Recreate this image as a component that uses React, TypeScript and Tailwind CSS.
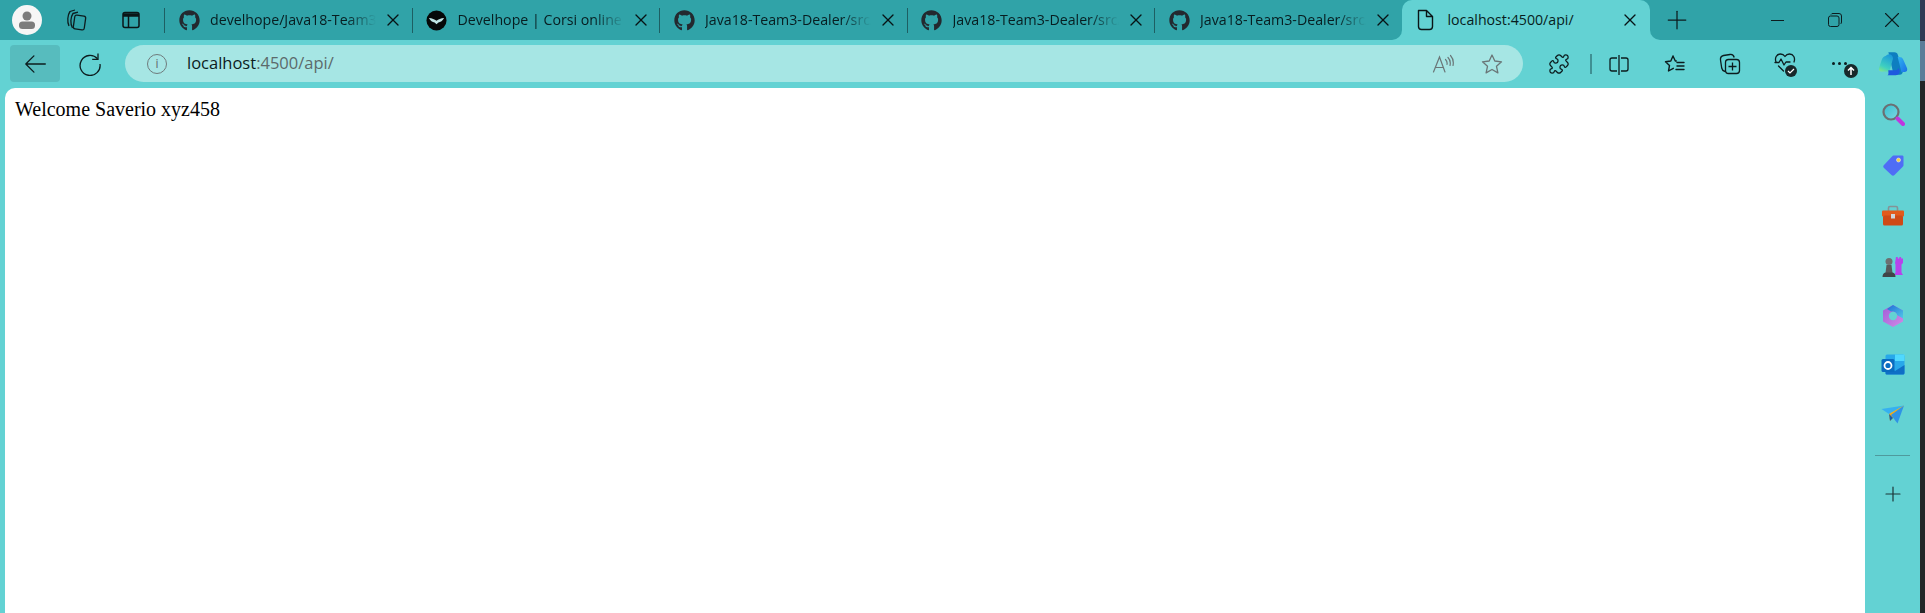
import { FaGithub } from "react-icons/fa";
import { Plus, Puzzle, X } from "lucide-react";

const tabs = [
  { id: 1, title: "develhope/Java18-Team3-Dealer", icon: "github" },
  { id: 2, title: "Develhope | Corsi online per il lavoro", icon: "develhope" },
  { id: 3, title: "Java18-Team3-Dealer/src/main", icon: "github" },
  { id: 4, title: "Java18-Team3-Dealer/src/main", icon: "github" },
  { id: 5, title: "Java18-Team3-Dealer/src/main", icon: "github" },
];

function DevelhopeIcon() {
  return (
    <svg width="21" height="21" viewBox="0 0 22 22">
      <circle cx="11" cy="11" r="10.5" fill="#050808" />
      <path d="M3 8.5c3.500.4 6 1.200 8 2.800 2-1.600 4.500-2.400 8-2.800-1.500 3-3.800 4.200-6 4.600L11 15l-2-1.900C6.800 12.700 4.500 11.500 3 8.500z" fill="#bfe4e4" />
    </svg>
  );
}

function Tab({ title, icon }: { title: string; icon: string }) {
  return (
    <div className="flex w-[247.5px] h-[40px] items-center shrink-0">
      <div className="w-[1px] h-[25px] bg-[#1d5f63] shrink-0" />
      <div className="ml-[13px] w-[22px] flex justify-center shrink-0">
        {icon === "github" ? <FaGithub className="text-[#23292f] text-[21px]" /> : <DevelhopeIcon />}
      </div>
      <span className="ml-[10px] w-[166px] overflow-hidden whitespace-nowrap text-[14.2px] text-[#071d20] [mask-image:linear-gradient(to_right,black_82%,transparent)]">
        {title}
      </span>
      <X size={20} strokeWidth={1.6} className="ml-[7px] text-[#071315] shrink-0" />
    </div>
  );
}

function TabStrip() {
  return (
    <div className="flex h-[40px] shrink-0 bg-[#63d2d3]">
      <div className="flex items-center h-[40px] w-[1401.5px] shrink-0 bg-[#30a3a8] rounded-br-[10px]">
        <div className="w-[54px] flex justify-center shrink-0">
          <div className="w-[30px] h-[30px] rounded-full bg-[#f6f6f6] flex items-center justify-center">
            <svg width="20" height="20" viewBox="0 0 20 20" fill="#7c7c7c">
              <circle cx="10" cy="6" r="4.5" />
              <rect x="2" y="11.5" width="16" height="7.5" rx="3.5" />
            </svg>
          </div>
        </div>
        <div className="w-[46px] flex justify-center shrink-0 pr-[2px]">
          <svg width="24" height="24" viewBox="0 0 24 24" fill="none" stroke="#0c1c1e" strokeWidth="1.3" strokeLinejoin="round">
            <rect x="10" y="7.5" width="11" height="14" rx="2" transform="rotate(8 15.5 14.5)" />
            <path d="M8.500 20C6 16 6.500 9 9 5.500l5-1.300M5 18C3 14 3.500 7 6 3.500L11 2" />
          </svg>
        </div>
        <div className="w-[60px] flex justify-center shrink-0 pl-[2px]">
          <svg width="20" height="20" viewBox="0 0 20 20" fill="none" stroke="#0a1517" strokeWidth="1.5">
            <rect x="2" y="2.5" width="16" height="15" rx="2" />
            <path d="M2 5h16" strokeWidth="3.5" />
            <path d="M7.500 6v11" />
          </svg>
        </div>
        <div className="w-[4px] shrink-0" />
        {tabs.map((tab) => (
          <Tab key={tab.id} title={tab.title} icon={tab.icon} />
        ))}
      </div>
      <div className="w-[248.5px] h-[40px] shrink-0 bg-[#30a3a8]">
        <div className="flex h-full items-center bg-[#63d2d3] rounded-t-[10px] pl-[14px]">
          <svg width="18" height="22" viewBox="0 0 18 22" fill="none" stroke="#0a1517" strokeWidth="1.4" strokeLinejoin="round">
            <path d="M2.500 1.500h8l6 6v10a3 3 0 0 1-3 3h-8a3 3 0 0 1-3-3z M10.500 1.500v6h6" />
          </svg>
          <span className="ml-[14px] w-[172px] whitespace-nowrap text-[14.2px] text-[#071d20]">localhost:4500/api/</span>
          <X size={20} strokeWidth={1.6} className="text-[#071315] shrink-0" />
        </div>
      </div>
      <div className="flex flex-1 items-center bg-[#30a3a8] rounded-bl-[10px]">
        <div className="w-[54px] flex justify-center shrink-0">
          <Plus size={30} strokeWidth={1} className="text-[#0c1c1e]" />
        </div>
        <div className="ml-auto flex items-center">
          <div className="w-[57px] flex justify-center">
            <div className="w-[13px] h-[1px] bg-[#0c1c1e]" />
          </div>
          <div className="w-[57px] flex justify-center">
            <svg width="14" height="14" viewBox="0 0 14 14" fill="none" stroke="#0c1c1e" strokeWidth="1">
              <rect x="0.5" y="3" width="10.5" height="10.5" rx="2" />
              <path d="M3 1.500C3.500.700 4 .5 5 .5h6a2.500 2.500 0 0 1 2.500 2.500v6c0 1-.4 1.700-1 2" />
            </svg>
          </div>
          <div className="w-[57px] flex justify-center">
            <X size={26} strokeWidth={1} className="text-[#0c1c1e]" />
          </div>
        </div>
      </div>
    </div>
  );
}

function CopilotLogo() {
  return (
    <svg width="30" height="27" viewBox="0 0 32 28">
      <defs>
        <linearGradient id="copLeft" x1="0.6" y1="0" x2="0.2" y2="1">
          <stop offset="0" stopColor="#1d9bd8" />
          <stop offset="0.7" stopColor="#3fd0c0" />
          <stop offset="1" stopColor="#7be38f" />
        </linearGradient>
        <linearGradient id="copRight" x1="0" y1="0" x2="1" y2="1">
          <stop offset="0" stopColor="#2fb4ef" />
          <stop offset="1" stopColor="#1a6fe8" />
        </linearGradient>
      </defs>
      <path d="M11 1h6.500c2 0 3.200 1 3.800 3l5 16c.7 2.800-1 5-3.800 5h-3c-2 0-3-1-3.500-3L12 5c-.4-2.200-.8-3.500-1-4z" fill="#0e7ec0" />
      <path d="M8 5c-2 .5-3 1.500-4 4l-3 9c-.5 2 .5 3.500 3 3.500h5.500c2 0 3-1 3.500-3l3-11C16 5 14 3 12 3c-1.500 0-3 1-4 2z" fill="url(#copLeft)" />
      <path d="M21 6c3 0 5 0 6 3l4 9c.7 3-1 4-3 4h-3l-4-16z" fill="url(#copRight)" />
      <path d="M11 20h8c1.500 0 2.500-1 3-2.500l1 3c.6 2.500-1 5-4 5H9c3 0 2-3 2-5.500z" fill="#1f58de" />
    </svg>
  );
}

function Toolbar() {
  return (
    <div className="flex h-[48px] items-center shrink-0 pl-[10px] pb-[1px] bg-[#63d2d3]">
      <div className="w-[50px] h-[37px] rounded-[4px] bg-[#57bcbe] flex items-center justify-center shrink-0">
        <svg width="26" height="26" viewBox="0 0 24 24" fill="none" stroke="#0c1c1e" strokeWidth="1.2" strokeLinecap="round" strokeLinejoin="round">
          <path d="M21.500 12H3.500M11 4.500 3.500 12l7.500 7.500" />
        </svg>
      </div>
      <div className="w-[60px] flex justify-center shrink-0">
        <svg width="24" height="24" viewBox="0 0 24 24" fill="none" stroke="#0c1c1e" strokeWidth="1.3">
          <path d="M19.500 6.700A10 10 0 1 0 22 12" />
          <path d="M20 1.500v5.800h-5.800" />
        </svg>
      </div>
      <div className="ml-[5px] flex h-[37px] w-[1398px] items-center rounded-full bg-[#a6e6e4] shrink-0">
        <div className="ml-[22px] w-[20px] h-[20px] rounded-full border border-[#6f7b7c] flex items-center justify-center text-[12px] leading-none text-[#5f6c6d]">
          i
        </div>
        <span className="ml-[20px] text-[16.5px] text-[#0c1c1e] whitespace-nowrap">
          localhost<span className="text-[#5c6a6b]">:4500/api/</span>
        </span>
        <div className="ml-auto flex items-center gap-[27px] pr-[20px]">
          <svg width="22" height="22" viewBox="0 0 22 22" fill="none" stroke="#6a7677" strokeWidth="1.2" strokeLinecap="round">
            <path d="M1.500 19 7.500 4l5.500 15M3.500 14.500h8" />
            <path d="M13.500 6.500c1.500 1.500 1.800 3.500 1.500 5M16 4.500c2 2 2.700 5 2 8M18.500 2.500c2.500 2.800 3.200 6.800 2.500 10" />
          </svg>
          <svg width="22" height="22" viewBox="0 0 22 22" fill="none" stroke="#6a7677" strokeWidth="1.3" strokeLinejoin="round">
            <path d="m11 2 2.800 6 6.700.8-5 4.500 1.400 6.600L11 16.500 5.100 19.900l1.400-6.600-5-4.500 6.700-.8z" />
          </svg>
        </div>
      </div>
      <div className="ml-[25px] shrink-0">
        <Puzzle size={22} strokeWidth={1.4} className="text-[#0c1c1e]" />
      </div>
      <div className="ml-[20px] w-[2px] h-[20px] bg-[#3f9093] shrink-0" />
      <div className="w-[54px] flex justify-center shrink-0">
        <svg width="20" height="22" viewBox="0 0 20 22" fill="none" stroke="#0c1c1e" strokeWidth="1.3">
          <path d="M8 5H3a2 2 0 0 0-2 2v9a2 2 0 0 0 2 2h5M12 5h5a2 2 0 0 1 2 2v9a2 2 0 0 1-2 2h-5M10 2v20" />
        </svg>
      </div>
      <div className="w-[58px] flex justify-center shrink-0">
        <svg width="22" height="22" viewBox="0 0 22 22" fill="none" stroke="#0c1c1e" strokeWidth="1.4" strokeLinejoin="round" strokeLinecap="round">
          <path d="M9 3 6.800 8 1.500 8.800l4 3.700-1 5.500 4.800-2.700M9 3l2.300 5h1" />
          <path d="M13 9.500h7M13 13h7M12 16.500h8" />
        </svg>
      </div>
      <div className="w-[52px] flex justify-center shrink-0">
        <svg width="22" height="22" viewBox="0 0 22 22" fill="none" stroke="#0c1c1e" strokeWidth="1.3" strokeLinejoin="round">
          <path d="M6 18.500c-2-.5-3-2-3.300-3.500L1.500 7c-.3-2.500 1-4 3-4.500L11 1.500c2-.3 3.700.7 4.200 3" />
          <rect x="6.500" y="6.500" width="14" height="14" rx="3" />
          <path d="M13.500 9.500v8M9.500 13.500h8" />
        </svg>
      </div>
      <div className="relative w-[58px] h-[24px] flex justify-center shrink-0">
        <svg width="22" height="22" viewBox="0 0 22 22" fill="none" stroke="#0c1c1e" strokeWidth="1.3" strokeLinejoin="round" strokeLinecap="round">
          <path d="M2 10C.5 6 2.500 2 6.500 2c2 0 3.500 1 4.500 2.500C12 3 13.500 2 15.500 2c4 0 6 4 4.500 8" />
          <path d="M1 10.500h4l2-3.500 3 6 2-3h4M4.500 14 9.500 19" />
        </svg>
        <div className="absolute left-[29px] top-[13px] w-[12px] h-[12px] rounded-full bg-[#17282a] flex items-center justify-center">
          <svg width="8" height="8" viewBox="0 0 8 8" fill="none" stroke="#fff" strokeWidth="1.2">
            <path d="m1 4 2 2 4-4" />
          </svg>
        </div>
      </div>
      <div className="relative w-[52px] h-[24px] flex items-center justify-center shrink-0">
        <div className="flex gap-[3px] -ml-[1px]">
          <div className="w-[3px] h-[3px] rounded-full bg-[#0c1c1e]" />
          <div className="w-[3px] h-[3px] rounded-full bg-[#0c1c1e]" />
          <div className="w-[3px] h-[3px] rounded-full bg-[#0c1c1e]" />
        </div>
        <div className="absolute left-[30px] top-[12px] w-[14px] h-[14px] rounded-full bg-[#17282a] flex items-center justify-center">
          <svg width="10" height="10" viewBox="0 0 10 10" fill="none" stroke="#fff" strokeWidth="1.5">
            <path d="M5 9V1.500M2 4.500l3-3 3 3" />
          </svg>
        </div>
      </div>
      <div className="ml-[12px] shrink-0 mt-[2px]">
        <CopilotLogo />
      </div>
    </div>
  );
}

function Sidebar() {
  return (
    <div className="w-[55px] shrink-0 flex flex-col items-center pt-[12px] bg-[#63d2d3]">
      <div className="h-[30px] flex items-center justify-center">
        <svg width="24" height="26" viewBox="0 0 24 26">
          <defs>
            <linearGradient id="lens" x1="0" y1="0" x2="1" y2="1">
              <stop offset="0" stopColor="#34c1cf" />
              <stop offset="1" stopColor="#7fd6e2" />
            </linearGradient>
          </defs>
          <circle cx="10" cy="10" r="7.5" fill="url(#lens)" stroke="#6c6f72" strokeWidth="2.2" />
          <path d="M16.500 16.500 22 22" stroke="#c036e0" strokeWidth="4" strokeLinecap="round" />
        </svg>
      </div>
      <div className="h-[50px] mt-[10px] flex items-center justify-center">
        <svg width="24" height="24" viewBox="0 0 24 24">
          <path d="M13 2.500h8c1 0 1.500.5 1.500 1.500v8c0 1-.5 1.500-1 2l-8 8c-1 1-2 1-3 0l-7.500-7c-1-1-1-2 0-3l8-8.500c.5-.5 1-1 2-1z" fill="#4f6df5" />
          <circle cx="17.500" cy="7" r="2" fill="#f6d23c" stroke="#dde6f7" strokeWidth=".6" />
        </svg>
      </div>
      <div className="h-[52px] flex items-center justify-center">
        <svg width="24" height="22" viewBox="0 0 24 22">
          <path d="M7.500 6V3c0-1 .5-1.500 1.500-1.500h6c1 0 1.500.5 1.500 1.500v3" fill="none" stroke="#849396" strokeWidth="1.6" />
          <rect x="1" y="5.5" width="22" height="6" rx="1" fill="#e25b1d" />
          <rect x="2" y="10.5" width="20" height="10" rx="1.5" fill="#cf4a17" />
          <rect x="10" y="9" width="4" height="4.5" fill="#cfd6dc" />
        </svg>
      </div>
      <div className="h-[50px] flex items-center justify-center">
        <svg width="24" height="24" viewBox="0 0 24 24">
          <path d="M15 2h1.800v1.500h1.500V2h1.800v1.500H22V2v6l-1.500 1.500v8l1.500 2.500h-9l1.500-2.500v-8L14 8z" fill="#b743ec" />
          <circle cx="8" cy="6.5" r="3.5" fill="#6c7072" />
          <path d="M5.500 10h5l1 8h-7z" fill="#565a5c" />
          <path d="M1.500 22c0-2.500 1-4 3-4.500h7c2 .5 3 2 3 4.500z" fill="#404547" />
        </svg>
      </div>
      <div className="h-[48px] flex items-center justify-center">
        <svg width="24" height="24" viewBox="0 0 24 24">
          <defs>
            <linearGradient id="m365" x1="0" y1="0" x2="1" y2="1">
              <stop offset="0" stopColor="#a05ed8" />
              <stop offset="1" stopColor="#d08ae6" />
            </linearGradient>
            <linearGradient id="m365b" x1="0" y1="0" x2="1" y2="1">
              <stop offset="0" stopColor="#1f6cd8" />
              <stop offset="1" stopColor="#52c6e8" />
            </linearGradient>
          </defs>
          <path d="M12 1 22 6.500v11L12 23 2 17.500v-11z" fill="url(#m365)" />
          <path d="M12 1 22 6.500v8L16 11c-1-3-3-4-6-3.500L6 5z" fill="url(#m365b)" />
          <circle cx="12" cy="12" r="4.2" fill="#63d2d3" />
        </svg>
      </div>
      <div className="h-[50px] flex items-center justify-center">
        <svg width="24" height="24" viewBox="0 0 24 24">
          <rect x="4.5" y="1.5" width="19" height="20" rx="1.5" fill="#28a8ea" />
          <path d="M14 1.500h9.500v6.500H14z" fill="#50d9ff" />
          <path d="M4.500 12 14 18l9.500-6v8c0 1-1 1.500-1.500 1.500H6c-1 0-1.500-.5-1.500-1.500z" fill="#0f6fc6" />
          <rect x="0.5" y="6" width="13" height="13" rx="1.5" fill="#0a6cc0" />
          <circle cx="7" cy="12.5" r="3.5" fill="none" stroke="#fff" strokeWidth="1.8" />
        </svg>
      </div>
      <div className="h-[50px] flex items-center justify-center">
        <svg width="24" height="20" viewBox="0 0 24 20">
          <path d="M.5 4 23 .5 8 9z" fill="#36b0f0" />
          <path d="M23 .5 8 9l1 7z" fill="#f0a91c" />
          <path d="M23 .5 10 10l6.500 8.500z" fill="#2f93e6" />
          <path d="m9 16 3-3-4-4z" fill="#155fa8" />
        </svg>
      </div>
      <div className="w-[35px] h-[1px] bg-[#4f9a9d] mt-[15px]" />
      <div className="mt-[26px]">
        <Plus size={24} strokeWidth={1.2} className="text-[#1d3437]" />
      </div>
    </div>
  );
}

export default function App() {
  return (
    <div className="flex h-[613px] w-[1925px] overflow-hidden font-['Open_Sans','Noto_Sans',sans-serif]">
      <div className="flex w-[1920px] flex-col shrink-0 bg-[#63d2d3]">
        <TabStrip />
        <Toolbar />
        <div className="flex flex-1 min-h-0">
          <div className="w-[5px] shrink-0" />
          <div className="flex-1 bg-white rounded-t-[10px] p-[10px] font-['Liberation_Serif',serif] text-[20px] leading-[23px] text-black">
            Welcome Saverio xyz458
          </div>
          <Sidebar />
        </div>
      </div>
      <div className="flex w-[5px] flex-col shrink-0">
        <div className="h-[40px] bg-[#2f3b55]" />
        <div className="h-[41px] border-t border-[#2b3340] bg-[#5b7d99]" />
        <div className="flex-1 bg-[#232527]" />
      </div>
    </div>
  );
}
